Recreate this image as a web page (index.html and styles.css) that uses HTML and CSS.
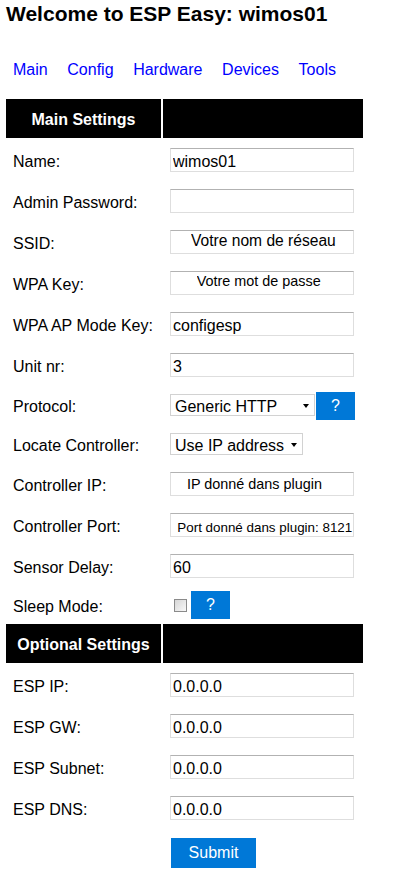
FILE: index.html
```html
<!DOCTYPE html>
<html lang="en">
<head>
<meta charset="utf-8">
<title>Welcome to ESP Easy: wimos01</title>
<link rel="stylesheet" href="styles.css">
</head>
<body>
<div class="page">
  <h1 class="title">Welcome to ESP Easy: wimos01</h1>
  <nav class="menu">
    <a class="menu-link" href="#">Main</a>
    <a class="menu-link" href="#">Config</a>
    <a class="menu-link" href="#">Hardware</a>
    <a class="menu-link" href="#">Devices</a>
    <a class="menu-link" href="#">Tools</a>
  </nav>
  <form class="form">
    <table class="settings">
      <colgroup><col class="col-label"><col class="col-field"></colgroup>
      <tr><th class="section">Main Settings</th><th class="section"></th></tr>
      <tr><td class="label">Name:</td><td class="field"><input class="text" value="wimos01"></td></tr>
      <tr><td class="label">Admin Password:</td><td class="field"><input class="text" type="password" value=""></td></tr>
      <tr><td class="label">SSID:</td><td class="field"><input class="text text-ssid" value="Votre nom de réseau"></td></tr>
      <tr><td class="label">WPA Key:</td><td class="field"><input class="text text-key" value="Votre mot de passe"></td></tr>
      <tr><td class="label">WPA AP Mode Key:</td><td class="field"><input class="text" value="configesp"></td></tr>
      <tr><td class="label">Unit nr:</td><td class="field"><input class="text" value="3"></td></tr>
      <tr><td class="label">Protocol:</td><td class="field"><div class="ctrl"><div class="select select-protocol"><span>Generic HTTP</span><span class="caret"></span></div><a class="help" href="#">?</a></div></td></tr>
      <tr><td class="label">Locate Controller:</td><td class="field"><div class="ctrl"><div class="select select-locate"><span>Use IP address</span><span class="caret"></span></div></div></td></tr>
      <tr><td class="label">Controller IP:</td><td class="field"><input class="text text-ip" value="IP donné dans plugin"></td></tr>
      <tr><td class="label">Controller Port:</td><td class="field"><input class="text text-port" value="Port donné dans plugin: 8121"></td></tr>
      <tr><td class="label">Sensor Delay:</td><td class="field"><input class="text" value="60"></td></tr>
      <tr><td class="label">Sleep Mode:</td><td class="field"><div class="ctrl ctrl-check"><input class="check" type="checkbox"><a class="help help-sleep" href="#">?</a></div></td></tr>
      <tr><th class="section">Optional Settings</th><th class="section"></th></tr>
      <tr><td class="label">ESP IP:</td><td class="field"><input class="text" value="0.0.0.0"></td></tr>
      <tr><td class="label">ESP GW:</td><td class="field"><input class="text" value="0.0.0.0"></td></tr>
      <tr><td class="label">ESP Subnet:</td><td class="field"><input class="text" value="0.0.0.0"></td></tr>
      <tr><td class="label">ESP DNS:</td><td class="field"><input class="text" value="0.0.0.0"></td></tr>
      <tr><td class="label"></td><td class="field field-submit"><button class="submit" type="button">Submit</button></td></tr>
    </table>
  </form>
</div>
</body>
</html>
```
FILE: styles.css
```css
html, body {
  margin: 0;
  padding: 0;
  background: #fff;
}
body {
  font-family: "Liberation Sans", Arial, sans-serif;
  font-size: 16px;
  color: #000;
}
.page {
  padding: 0 0 0 4px;
}
.title {
  margin: 2px 0 0 2px;
  font-size: 21px;
  line-height: 24px;
  font-weight: bold;
}
.menu {
  display: flex;
  gap: 19.6px;
  margin-top: 34px;
  padding-left: 9px;
  line-height: 19px;
}
.menu-link {
  color: #0000ff;
  text-decoration: none;
}
.form {
  margin: 18px 0 0;
}
.settings {
  border-collapse: separate;
  border-spacing: 2px;
  table-layout: fixed;
  width: 361px;
}
.col-label { width: 155px; }
.col-field { width: 200px; }
.section {
  background: #000;
  color: #fff;
  font-weight: bold;
  padding: 10.5px 10px 9.5px;
  line-height: 19px;
  text-align: center;
}
.label {
  padding: 4px 7px 0;
  line-height: 18px;
  vertical-align: middle;
  white-space: nowrap;
  text-align: left;
}
.field {
  padding: 8px 7px 7px;
  vertical-align: top;
}
.field-submit {
  padding: 8px 7px 0;
}
.text {
  display: block;
  box-sizing: border-box;
  width: 184px;
  height: 24px;
  margin: 0;
  padding: 4px 2px 0;
  border: 1px solid #dedede;
  border-top-color: #b2b2b2;
  font-family: "Liberation Sans", Arial, sans-serif;
  font-size: 16px;
  line-height: 18px;
  color: #000;
  background: #fff;
  outline: none;
}
.text-ssid {
  font-size: 15.6px;
  line-height: 16px;
  padding: 1.6px 2px 4.4px 20px;
}
.text-key {
  font-size: 14.4px;
  line-height: 16px;
  padding: 1px 2px 5px 25.7px;
}
.text-ip {
  font-size: 14.4px;
  line-height: 16px;
  padding: 3px 2px 3px 16px;
}
.text-port {
  font-size: 13.4px;
  line-height: 16px;
  padding: 5px 0 1px 6.3px;
}
.ctrl {
  display: flex;
  align-items: flex-start;
  height: 22px;
}
.ctrl-check {
  height: 20px;
}
.select {
  box-sizing: border-box;
  height: 22px;
  display: flex;
  align-items: flex-start;
  border: 1px solid #d2d2d2;
  padding: 4px 0 0 4px;
  line-height: 16px;
  background: #fff;
  flex: none;
}
.select-protocol { width: 145px; }
.select-locate { width: 133px; }
.caret {
  width: 0;
  height: 0;
  border-left: 3.5px solid transparent;
  border-right: 3.5px solid transparent;
  border-top: 4px solid #000;
  margin: 5px 5px 0 auto;
}
.help {
  display: block;
  flex: none;
  width: 39px;
  height: 28px;
  line-height: 28px;
  border: 1px solid #fff;
  background: #0078d7;
  color: #fff;
  text-align: center;
  text-decoration: none;
  margin-top: -3px;
}
.help-sleep {
  margin-top: -5px;
}
.check {
  -webkit-appearance: none;
  appearance: none;
  box-sizing: border-box;
  flex: none;
  width: 13px;
  height: 13px;
  margin: 4px 3px 0 4px;
  border: 1px solid #8a8a8a;
  background: linear-gradient(135deg, #d6d6d6, #f8f8f8);
}
.submit {
  display: block;
  width: 87px;
  height: 32px;
  margin: 0;
  padding: 0;
  border: 1px solid #fff;
  background: #0078d7;
  color: #fff;
  font-family: "Liberation Sans", Arial, sans-serif;
  font-size: 16px;
  line-height: 30px;
  text-align: center;
}
```
